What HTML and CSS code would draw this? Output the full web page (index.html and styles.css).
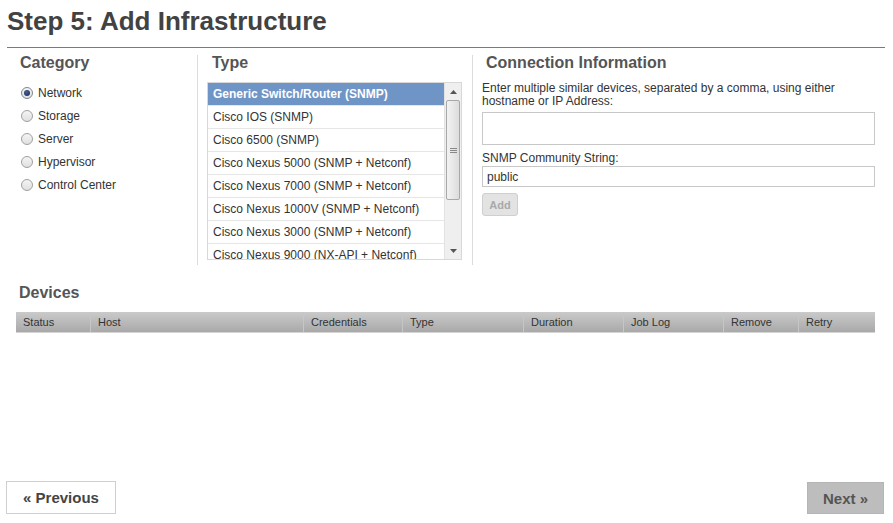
FILE: index.html
```html
<!DOCTYPE html>
<html>
<head>
<meta charset="utf-8">
<title>Step 5: Add Infrastructure</title>
<link rel="stylesheet" href="styles.css">
</head>
<body>
<div class="page">
  <h1 class="title">Step 5: Add Infrastructure</h1>

  <div class="top">
    <div class="col col-category">
      <h2 class="section-title">Category</h2>
      <ul class="radio-list">
        <li><label><input type="radio" name="cat" checked><span>Network</span></label></li>
        <li><label><input type="radio" name="cat"><span>Storage</span></label></li>
        <li><label><input type="radio" name="cat"><span>Server</span></label></li>
        <li><label><input type="radio" name="cat"><span>Hypervisor</span></label></li>
        <li><label><input type="radio" name="cat"><span>Control Center</span></label></li>
      </ul>
    </div>

    <div class="col col-type">
      <h2 class="section-title indent">Type</h2>
      <div class="listbox">
        <ul class="options">
          <li class="option selected">Generic Switch/Router (SNMP)</li>
          <li class="option">Cisco IOS (SNMP)</li>
          <li class="option">Cisco 6500 (SNMP)</li>
          <li class="option">Cisco Nexus 5000 (SNMP + Netconf)</li>
          <li class="option">Cisco Nexus 7000 (SNMP + Netconf)</li>
          <li class="option">Cisco Nexus 1000V (SNMP + Netconf)</li>
          <li class="option">Cisco Nexus 3000 (SNMP + Netconf)</li>
          <li class="option">Cisco Nexus 9000 (NX-API + Netconf)</li>
        </ul>
        <div class="scrollbar">
          <div class="sb-btn"><svg width="7" height="4" viewBox="0 0 7 4"><path d="M0 4 L3.5 0 L7 4 Z" fill="#555"/></svg></div>
          <div class="sb-track">
            <div class="sb-thumb"><span class="grip"></span></div>
          </div>
          <div class="sb-btn"><svg width="7" height="4" viewBox="0 0 7 4"><path d="M0 0 L7 0 L3.5 4 Z" fill="#555"/></svg></div>
        </div>
      </div>
    </div>

    <div class="col col-conn">
      <h2 class="section-title indent">Connection Information</h2>
      <p class="help">Enter multiple similar devices, separated by a comma, using either hostname or IP Address:</p>
      <textarea class="hosts"></textarea>
      <p class="field-label">SNMP Community String:</p>
      <input class="text-input" type="text" value="public">
      <button class="btn-add" disabled>Add</button>
    </div>
  </div>

  <h2 class="section-title devices-title">Devices</h2>
  <div class="table-head">
    <div class="th w-status">Status</div>
    <div class="th w-host">Host</div>
    <div class="th w-cred">Credentials</div>
    <div class="th w-type">Type</div>
    <div class="th w-dur">Duration</div>
    <div class="th w-log">Job Log</div>
    <div class="th w-remove">Remove</div>
    <div class="th w-retry">Retry</div>
  </div>

  <div class="footer">
    <button class="btn-prev">« Previous</button>
    <button class="btn-next">Next »</button>
  </div>
</div>
</body>
</html>
```

FILE: styles.css
```css
* { box-sizing: border-box; }

html, body {
  margin: 0;
  padding: 0;
  background: #ffffff;
}

body {
  font-family: "Liberation Sans", Arial, sans-serif;
  color: #333;
}

.page {
  height: 523px;
  display: flex;
  flex-direction: column;
}

.title {
  margin: 6px 8px 0 7px;
  padding: 0 0 11px 0;
  font-size: 26px;
  line-height: 30px;
  font-weight: bold;
  color: #424242;
  border-bottom: 1px solid #7a7a7a;
}

.top {
  display: grid;
  grid-template-columns: 197px 275px 403px;
  margin-top: 7px;
}

.col {
  padding-bottom: 3px;
}

.col-category {
  padding-left: 20px;
}

.col-type {
  border-left: 1px solid #dcdcdc;
  padding-left: 9px;
  padding-right: 10px;
  padding-bottom: 5px;
}

.col-conn {
  border-left: 1px solid #dcdcdc;
  padding-left: 9px;
  display: flex;
  flex-direction: column;
  align-items: flex-start;
}

.section-title {
  margin: 0;
  font-size: 16px;
  line-height: 16px;
  font-weight: bold;
  color: #555;
}

.section-title.indent {
  padding-left: 5px;
}

.col-category .section-title { margin-bottom: 10px; }
.col-type .section-title { margin-bottom: 11px; }
.col-conn .section-title { margin-bottom: 11px; padding-left: 4px; }

.radio-list {
  list-style: none;
  margin: 0;
  padding: 0;
}

.radio-list li {
  height: 23px;
  display: flex;
  align-items: center;
}

.radio-list label {
  display: flex;
  align-items: center;
  font-size: 12px;
  color: #333;
}

.radio-list input {
  -webkit-appearance: none;
  appearance: none;
  margin: 0 5px 0 1px;
  width: 12px;
  height: 12px;
  border-radius: 50%;
  border: 1px solid #a0a0a0;
  background: linear-gradient(#f4f4f4, #e0e0e0);
  display: flex;
  align-items: center;
  justify-content: center;
}

.radio-list input:checked {
  border-color: #7d8593;
}

.radio-list input:checked::after {
  content: "";
  width: 6px;
  height: 6px;
  border-radius: 50%;
  background: radial-gradient(circle at 40% 35%, #4a6296, #14224a);
}

.listbox {
  width: 255px;
  height: 178px;
  border: 1px solid #d8d8d8;
  display: flex;
  overflow: hidden;
}

.options {
  list-style: none;
  margin: 0;
  padding: 0;
  flex: 1;
  overflow: hidden;
}

.option {
  height: 23px;
  line-height: 22px;
  padding-left: 5px;
  font-size: 12px;
  color: #333;
  border-bottom: 1px solid #e6e6e6;
  white-space: nowrap;
}

.option.selected {
  background: #6f95c7;
  color: #fff;
  font-weight: bold;
}

.scrollbar {
  width: 17px;
  background: #efefef;
  border-left: 1px solid #e2e2e2;
  display: flex;
  flex-direction: column;
}

.sb-btn {
  height: 17px;
  display: flex;
  align-items: center;
  justify-content: center;
}

.sb-track {
  flex: 1;
}

.sb-thumb {
  margin: 0 1px;
  height: 100px;
  border: 1px solid #a8a8a8;
  border-radius: 2px;
  background: linear-gradient(to right, #f3f3f3, #dcdcdc);
  display: flex;
  align-items: center;
  justify-content: center;
}

.grip {
  width: 7px;
  height: 5px;
  border-top: 1px solid #888;
  border-bottom: 1px solid #888;
  display: block;
  background: linear-gradient(#888, #888) center / 100% 1px no-repeat;
}

.help {
  margin: 0;
  font-size: 12px;
  line-height: 13px;
  color: #333;
  width: 393px;
}

.hosts {
  margin: 4px 0 0 0;
  width: 393px;
  height: 33px;
  border: 1px solid #c8c8c8;
  resize: none;
  display: block;
}

.field-label {
  margin: 7px 0 0 0;
  font-size: 12px;
  line-height: 13px;
  color: #333;
}

.text-input {
  margin: 1px 0 0 0;
  width: 393px;
  height: 21px;
  border: 1px solid #c8c8c8;
  padding: 0 4px;
  font-family: "Liberation Sans", Arial, sans-serif;
  font-size: 12px;
  color: #333;
}

.btn-add {
  margin-top: 6px;
  width: 36px;
  height: 23px;
  border: 1px solid #cfcfcf;
  border-radius: 3px;
  background: #e3e3e3;
  color: #a9a9a9;
  font-family: "Liberation Sans", Arial, sans-serif;
  font-size: 11px;
  font-weight: bold;
  padding: 0;
}

.devices-title {
  margin: 20px 0 0 19px;
}

.table-head {
  margin: 11px 0 0 16px;
  width: 859px;
  height: 21px;
  display: flex;
  background: linear-gradient(#cacaca, #a9a9a9);
  border-bottom: 1px solid #d5d5d5;
}

.th {
  font-size: 11px;
  line-height: 20px;
  color: #333;
  padding-left: 7px;
  border-left: 1px solid #c6c6c6;
}

.th:first-child { border-left: none; }

.w-status { width: 74px; }
.w-host { width: 213px; }
.w-cred { width: 99px; }
.w-type { width: 121px; }
.w-dur { width: 100px; }
.w-log { width: 100px; }
.w-remove { width: 75px; }
.w-retry { width: 77px; }

.footer {
  margin-top: auto;
  padding: 0 9px 9px 6px;
  display: flex;
  justify-content: space-between;
  align-items: flex-end;
}

.btn-prev {
  width: 110px;
  height: 33px;
  background: #fff;
  border: 1px solid #cfcfcf;
  font-family: "Liberation Sans", Arial, sans-serif;
  font-size: 15px;
  font-weight: bold;
  color: #444;
  padding: 0;
}

.btn-next {
  width: 77px;
  height: 32px;
  background: #bdbdbd;
  border: 1px solid #b5b5b5;
  font-family: "Liberation Sans", Arial, sans-serif;
  font-size: 15px;
  font-weight: bold;
  color: #555;
  padding: 0;
}
```
